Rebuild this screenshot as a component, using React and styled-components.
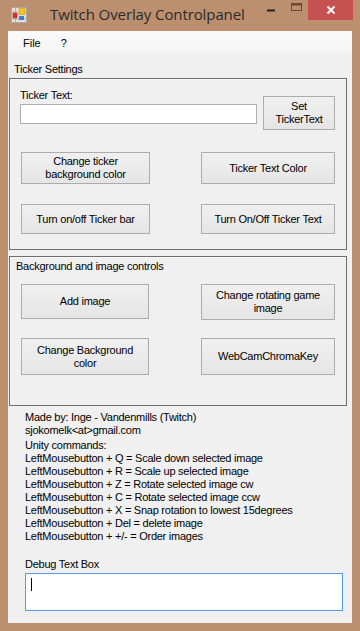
import React from "react";
import styled, { createGlobalStyle } from "styled-components";

const Global = createGlobalStyle`
  html, body { margin: 0; padding: 0; background: #bc8f6e; }
  body { font-family: "Liberation Sans", Arial, sans-serif; font-size: 11px; color: #000; letter-spacing: -0.25px; }
`;

const Frame = styled.div`
  width: 360px;
  height: 631px;
  background: #bc8f6e;
  display: flex;
  flex-direction: column;
  box-sizing: border-box;
  overflow: hidden;
`;

const TitleBar = styled.div`
  height: 31px;
  display: flex;
  align-items: flex-start;
`;

const AppIcon = styled.svg`
  margin: 7px 0 0 11px;
  flex: none;
`;

const Title = styled.div`
  margin: 4px 0 0 22px;
  font-family: "Open Sans", "Noto Sans", sans-serif;
  font-size: 15px;
  color: #2b2b2b;
  letter-spacing: -0.1px;
  flex: 1;
`;

const WinButtons = styled.div`
  display: flex;
  align-items: flex-start;
  margin-right: 7px;
`;

const WinBtn = styled.div`
  width: ${(p) => p.$w}px;
  height: 20px;
  display: flex;
  align-items: center;
  justify-content: center;
  background: ${(p) => p.$bg || "transparent"};
`;

const Client = styled.div`
  margin: 0 8px 0 8px;
  height: 592px;
  background: #f0f0f0;
  display: flex;
  flex-direction: column;
`;

const MenuBar = styled.div`
  height: 23px;
  background: linear-gradient(to bottom, #fafafa, #f4f4f4);
  display: flex;
  align-items: center;
  padding-left: 15px;
  gap: 20px;
`;

const MenuItem = styled.span`
  color: #000;
  letter-spacing: 0;
`;

const Body = styled.div`
  display: flex;
  flex-direction: column;
  padding: 0 5px 0 1px;
`;

const SectionLabel = styled.div`
  margin: 8px 0 0 5px;
  height: 14px;
  line-height: 14px;
`;

const Panel = styled.div`
  border: 1px solid #6e6e6e;
  box-shadow: inset 1px 1px 0 #f8f8f8;
  height: ${(p) => p.$h}px;
  box-sizing: border-box;
  margin-top: ${(p) => p.$mt || 0}px;
  display: flex;
  flex-direction: column;
  padding: ${(p) => p.$pad};
`;

const Row = styled.div`
  display: flex;
  justify-content: space-between;
  align-items: flex-start;
  margin-top: ${(p) => p.$mt || 0}px;
`;

const Col = styled.div`
  display: flex;
  flex-direction: column;
`;

const Label = styled.div`
  height: 14px;
  line-height: 14px;
`;

const TextBox = styled.div`
  width: ${(p) => p.$w}px;
  height: ${(p) => p.$h}px;
  box-sizing: border-box;
  background: #fff;
  border: 1px solid ${(p) => (p.$focus ? "#569de5" : "#abadb3")};
  margin-top: ${(p) => p.$mt || 0}px;
  padding: 4px 0 0 5px;
`;

const Caret = styled.div`
  width: 1px;
  height: 13px;
  background: #000;
`;

const Button = styled.div`
  width: ${(p) => p.$w}px;
  height: ${(p) => p.$h}px;
  box-sizing: border-box;
  border: 1px solid #acacac;
  background: linear-gradient(to bottom, #f0f0f0, #e5e5e5);
  display: flex;
  align-items: center;
  justify-content: center;
  text-align: center;
  line-height: 13px;
  padding: 0 4px;
  margin-top: ${(p) => p.$mt || 0}px;
  margin-left: ${(p) => p.$ml || 0}px;
`;

const Info = styled.div`
  display: flex;
  flex-direction: column;
  padding-left: 16px;
  margin-top: 5px;
`;

const Line = styled.div`
  height: 13px;
  line-height: 13px;
  white-space: nowrap;
  margin-top: ${(p) => p.$mt || 0}px;
`;

const DebugArea = styled.div`
  display: flex;
  flex-direction: column;
  padding-left: 16px;
  margin-top: 14px;
`;

const commands = [
  "LeftMousebutton + Q = Scale down selected image",
  "LeftMousebutton + R = Scale up selected image",
  "LeftMousebutton + Z = Rotate selected image cw",
  "LeftMousebutton + C = Rotate selected image ccw",
  "LeftMousebutton + X = Snap rotation to lowest 15degrees",
  "LeftMousebutton + Del = delete image",
  "LeftMousebutton + +/- = Order images",
];

export default function App() {
  return (
    <>
      <Global />
      <Frame>
        <TitleBar>
          <AppIcon width="17" height="17" viewBox="0 0 17 17">
            <rect x="0.5" y="0.5" width="15" height="15" fill="#e8e0d8" stroke="#a8a8a8" />
            <line x1="0.5" y1="5" x2="15.5" y2="5" stroke="#b0b0b0" />
            <line x1="0.5" y1="12" x2="15.5" y2="12" stroke="#b0b0b0" />
            <line x1="4.5" y1="0.5" x2="4.5" y2="15.5" stroke="#b0b0b0" />
            <rect x="2" y="6" width="4" height="5" fill="#d33" stroke="#a22" strokeWidth="0.5" />
            <rect x="8" y="1.5" width="6" height="6" fill="#f5c518" stroke="#c89b00" strokeWidth="0.5" />
            <rect x="8" y="9" width="5" height="4" fill="#3a7bd5" />
          </AppIcon>
          <Title>Twitch Overlay Controlpanel</Title>
          <WinButtons>
            <WinBtn $w={26}>
              <svg width="9" height="3"><rect width="8" height="2" y="0.5" fill="#222" /></svg>
            </WinBtn>
            <WinBtn $w={24}>
              <svg width="11" height="9" style={{ marginTop: -5 }}>
                <rect x="0.5" y="0.5" width="10" height="7" fill="none" stroke="#6b4a35" />
                <rect x="0.5" y="0.5" width="10" height="2" fill="#6b4a35" />
              </svg>
            </WinBtn>
            <WinBtn $w={45} $bg="#c75050">
              <svg width="10" height="10" viewBox="0 0 10 10">
                <path d="M1.5 1.5 L8.5 8.5 M8.5 1.5 L1.5 8.5" stroke="#fff" strokeWidth="2" />
              </svg>
            </WinBtn>
          </WinButtons>
        </TitleBar>
        <Client>
          <MenuBar>
            <MenuItem>File</MenuItem>
            <MenuItem>?</MenuItem>
          </MenuBar>
          <Body>
            <SectionLabel>Ticker Settings</SectionLabel>
            <Panel $h={172} $mt={2} $pad="9px 11px 0 10px">
              <Row>
                <Col>
                  <Label>Ticker Text:</Label>
                  <TextBox $w={237} $h={20} $mt={2} />
                </Col>
                <Button $w={72} $h={34} $mt={8}>Set TickerText</Button>
              </Row>
              <Row $mt={22}>
                <Button $w={129} $h={32} $ml={1}>Change ticker background color</Button>
                <Button $w={134} $h={32}>Ticker Text Color</Button>
              </Row>
              <Row $mt={20}>
                <Button $w={129} $h={30} $ml={1}>Turn on/off Ticker bar</Button>
                <Button $w={134} $h={30}>Turn On/Off Ticker Text</Button>
              </Row>
            </Panel>
            <Panel $h={150} $mt={6} $pad="2px 11px 0 6px">
              <Label>Background and image controls</Label>
              <Row $mt={11}>
                <Button $w={128} $h={35} $ml={5}>Add image</Button>
                <Button $w={134} $h={36}>Change rotating game image</Button>
              </Row>
              <Row $mt={18}>
                <Button $w={128} $h={37} $ml={5}>Change Background color</Button>
                <Button $w={134} $h={37}>WebCamChromaKey</Button>
              </Row>
            </Panel>
            <Info>
              <Line>Made by: Inge - Vandenmills (Twitch)</Line>
              <Line>sjokomelk&lt;at&gt;gmail.com</Line>
              <Line $mt={2}>Unity commands:</Line>
              {commands.map((c) => (
                <Line key={c}>{c}</Line>
              ))}
            </Info>
            <DebugArea>
              <Label>Debug Text Box</Label>
              <TextBox $w={318} $h={38} $mt={2} $focus>
                <Caret />
              </TextBox>
            </DebugArea>
          </Body>
        </Client>
      </Frame>
    </>
  );
}
